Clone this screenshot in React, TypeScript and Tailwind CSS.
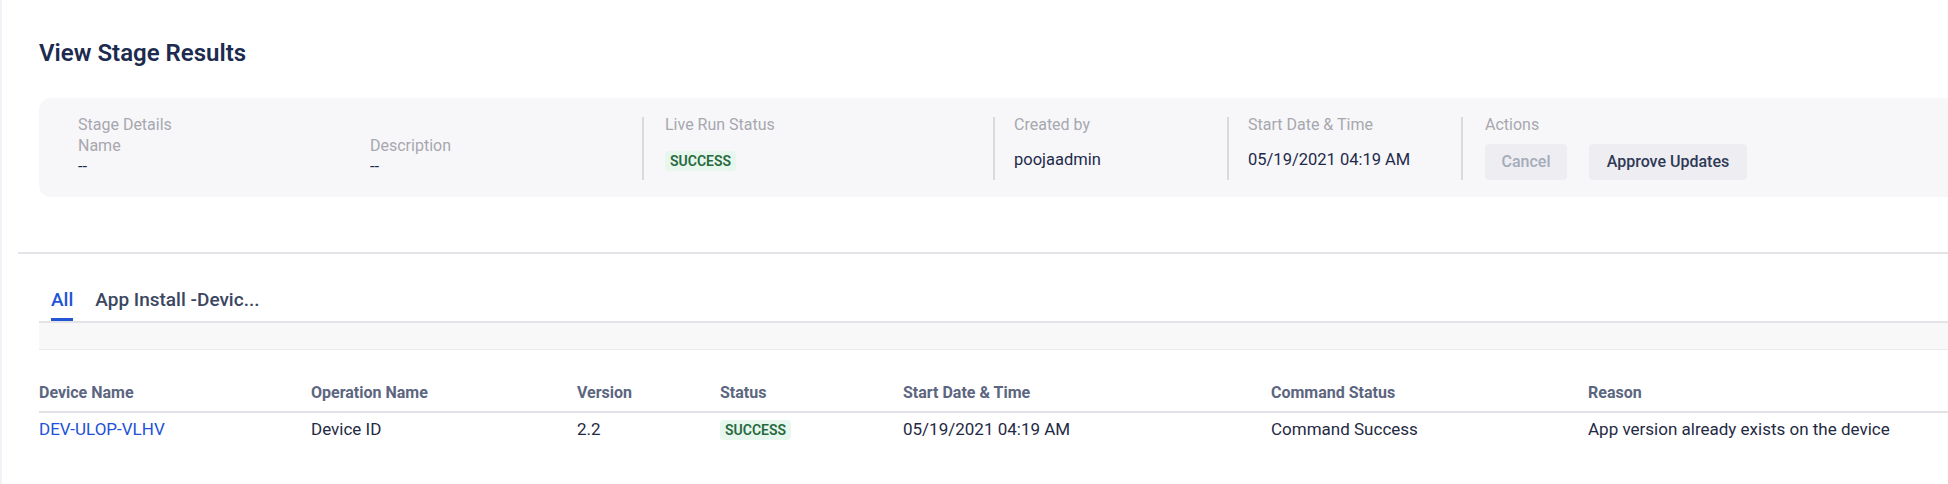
const label = "text-[16px] leading-[21px] text-[#a7a7ae]";
const value = "text-[16.5px] leading-[21px] text-[#1e2a4a]";

function Divider() {
  return <div className="mt-[3px] h-[63px] w-[2px] shrink-0 bg-[#dadade]" />;
}

function SuccessBadge() {
  return (
    <span className="inline-flex h-[20px] items-center rounded-[4px] bg-[#e8f7ed] px-[5px] text-[14px] font-semibold leading-none text-[#27693f]">
      SUCCESS
    </span>
  );
}

const columns = [
  { title: 'Device Name', w: 'w-[272px]' },
  { title: 'Operation Name', w: 'w-[266px]' },
  { title: 'Version', w: 'w-[143px]' },
  { title: 'Status', w: 'w-[183px]' },
  { title: 'Start Date & Time', w: 'w-[368px]' },
  { title: 'Command Status', w: 'w-[317px]' },
  { title: 'Reason', w: 'flex-1' },
];

export default function App() {
  return (
    <div className="min-h-screen w-full overflow-hidden border-l-2 border-[#f1f1f7] bg-white font-['Roboto','Liberation_Sans',sans-serif]">
      {/* header */}
      <div className="pl-[37px] pt-[37px]">
        <h1 className="text-[24px] font-semibold leading-[32px] text-[#1d2b4f]">View Stage Results</h1>
      </div>

      {/* stage summary card */}
      <div className="-mr-10 ml-[37px] mt-[29px] flex h-[99px] rounded-l-[12px] bg-[#f7f7fa] pl-[39px] pt-[16px]">
        <div className="w-[564px] shrink-0">
          <div className={label}>Stage Details</div>
          <div className="flex">
            <div className="w-[292px]">
              <div className={label}>Name</div>
              <div className={value}>--</div>
            </div>
            <div>
              <div className={label}>Description</div>
              <div className={value}>--</div>
            </div>
          </div>
        </div>
        <Divider />
        <div className="w-[349px] shrink-0 pl-[21px]">
          <div className={label}>Live Run Status</div>
          <div className="mt-[14px]">
            <SuccessBadge />
          </div>
        </div>
        <Divider />
        <div className="w-[232px] shrink-0 pl-[19px]">
          <div className={label}>Created by</div>
          <div className={`mt-[14px] ${value}`}>poojaadmin</div>
        </div>
        <Divider />
        <div className="w-[232px] shrink-0 pl-[19px]">
          <div className={label}>Start Date &amp; Time</div>
          <div className={`mt-[14px] ${value}`}>05/19/2021 04:19 AM</div>
        </div>
        <Divider />
        <div className="pl-[22px]">
          <div className={label}>Actions</div>
          <div className="mt-[9px] flex gap-[22px]">
            <button className="h-[36px] w-[82px] rounded-[4px] bg-[#ededf2] text-[16px] font-medium text-[#a5abb9]">
              Cancel
            </button>
            <button className="h-[36px] w-[158px] rounded-[4px] bg-[#ededf2] text-[16px] font-medium text-[#2f3a56]">
              Approve Updates
            </button>
          </div>
        </div>
      </div>

      <div className="ml-4 mt-[55px] h-[2px] bg-[#e3e3e8]" />

      {/* tabs */}
      <div className="ml-[37px] mt-[34px]">
        <div className="flex gap-[22px] border-b-2 border-[#e4e4e8] pl-[12px]">
          <div className="border-b-[3px] border-[#2456d3] pb-[6px] text-[19px] font-medium leading-[24px] text-[#1f55d6]">
            All
          </div>
          <div className="pb-[9px] text-[19px] font-medium leading-[24px] text-[#3b4661]">App Install -Devic...</div>
        </div>
        <div className="h-[27px] border-b border-[#ebebeb] bg-[#f8f8f8]" />
      </div>

      {/* results table */}
      <div className="ml-[37px] mt-[33px]">
        <div className="flex border-b-2 border-[#e1e1e6] pb-[8px]">
          {columns.map((c) => (
            <div key={c.title} className={`${c.w} shrink-0 text-[16px] font-bold leading-[20px] text-[#5c6680]`}>
              {c.title}
            </div>
          ))}
        </div>
        <div className="flex h-[32px] items-center text-[17px] leading-[20px] text-[#1f2a44]">
          <div className="w-[272px] shrink-0 text-[#2151d6]">DEV-ULOP-VLHV</div>
          <div className="w-[266px] shrink-0">Device ID</div>
          <div className="w-[143px] shrink-0">2.2</div>
          <div className="w-[183px] shrink-0">
            <SuccessBadge />
          </div>
          <div className="w-[368px] shrink-0">05/19/2021 04:19 AM</div>
          <div className="w-[317px] shrink-0">Command Success</div>
          <div className="flex-1">App version already exists on the device</div>
        </div>
      </div>
    </div>
  );
}
